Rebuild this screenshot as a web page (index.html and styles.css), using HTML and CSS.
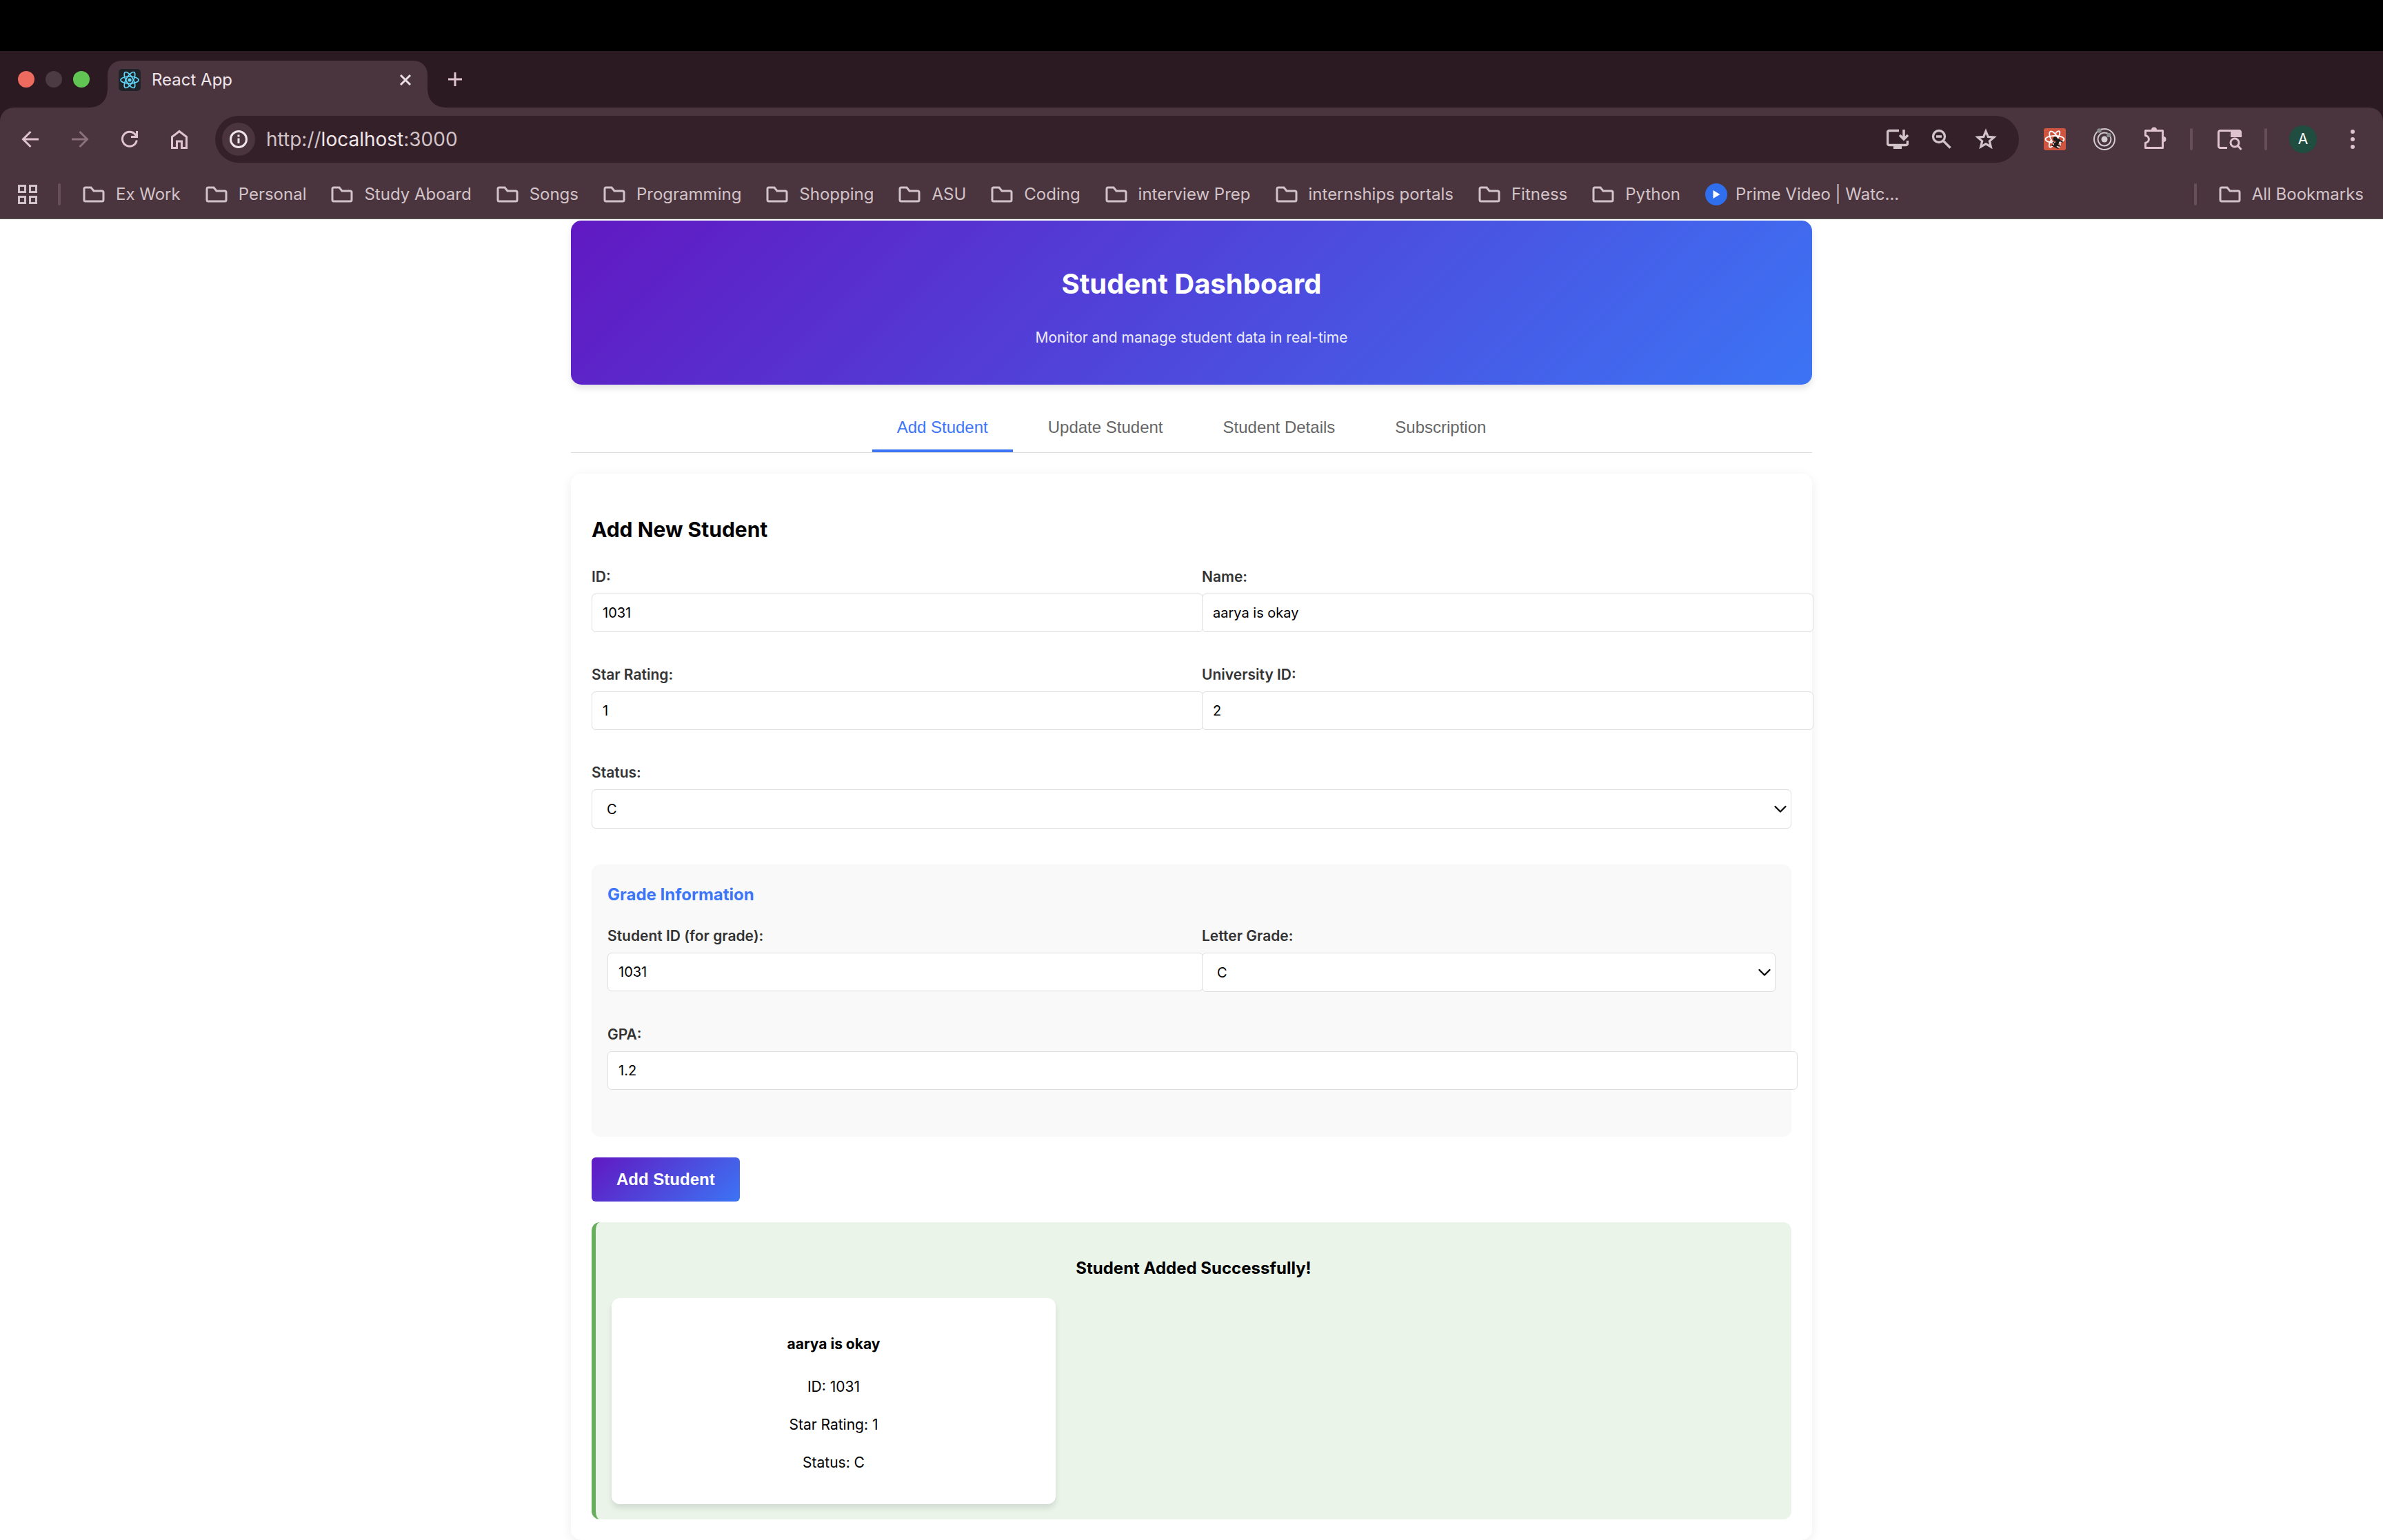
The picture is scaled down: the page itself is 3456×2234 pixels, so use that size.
FILE: index.html
```html
<!DOCTYPE html>
<html lang="en">
<head>
<meta charset="utf-8">
<meta name="viewport" content="width=device-width, initial-scale=1">
<title>React App</title>
<link rel="stylesheet" href="styles.css">
</head>
<body>
<svg class="sprite" aria-hidden="true">
  <symbol id="folder" viewBox="0 0 32 24"><path d="M4 2h8l4 5h12a2 2 0 0 1 2 2v11a2 2 0 0 1-2 2H4a2 2 0 0 1-2-2V4a2 2 0 0 1 2-2z" fill="none" stroke="currentColor" stroke-width="3"/></symbol>
  <symbol id="chevron" viewBox="0 0 18 12"><path d="M1.500 2l7.500 7.500L16.500 2" fill="none" stroke="currentColor" stroke-width="2.200" stroke-linecap="round" stroke-linejoin="round"/></symbol>
</svg>

<header class="browser">
  <div class="notch"></div>
  <div class="tabstrip">
    <div class="lights">
      <button class="light light-close" aria-label="Close window"></button>
      <button class="light light-min" aria-label="Minimize window"></button>
      <button class="light light-max" aria-label="Zoom window"></button>
    </div>
    <div class="tab">
      <svg class="icon" viewBox="0 0 32 32"><rect width="32" height="32" rx="5" fill="#20232a"/><g fill="none" stroke="#61dafb" stroke-width="1.6"><ellipse cx="16" cy="16" rx="13" ry="5"/><ellipse cx="16" cy="16" rx="13" ry="5" transform="rotate(60 16 16)"/><ellipse cx="16" cy="16" rx="13" ry="5" transform="rotate(120 16 16)"/></g><circle cx="16" cy="16" r="2.6" fill="#61dafb"/></svg>
      <span class="tab-title">React App</span>
      <button class="bare" aria-label="Close tab"><svg class="icon-sm" viewBox="0 0 20 20"><path d="M3 3l14 14M17 3L3 17" fill="none" stroke="#eadfe3" stroke-width="3"/></svg></button>
    </div>
    <button class="bare new-tab" aria-label="New tab"><svg class="icon-sm" viewBox="0 0 20 20"><path d="M10 0v20M0 10h20" fill="none" stroke="#dfc3ce" stroke-width="3"/></svg></button>
  </div>

  <div class="toolbar">
    <div class="nav-buttons">
      <button class="bare" aria-label="Back"><svg class="icon" viewBox="0 0 32 32"><path d="M28 16H6M16.500 5L5.500 16l11 11" fill="none" stroke="currentColor" stroke-width="3"/></svg></button>
      <button class="bare dim" aria-label="Forward"><svg class="icon" viewBox="0 0 32 32"><path d="M4 16h22M15.500 5l11 11-11 11" fill="none" stroke="currentColor" stroke-width="3"/></svg></button>
      <button class="bare" aria-label="Reload"><svg class="icon" viewBox="0 0 32 32"><path d="M26.300 17.500A10.500 10.500 0 1 1 24 9l2 2.500M26.500 4v8.500H18" fill="none" stroke="currentColor" stroke-width="3"/></svg></button>
      <button class="bare" aria-label="Home"><svg class="icon" viewBox="0 0 32 32"><path d="M5.500 28.500V12.500L16 4.500l10.500 8v16h-7v-9.500h-7v9.500z" fill="none" stroke="currentColor" stroke-width="3"/></svg></button>
    </div>
    <div class="address">
      <button class="info" aria-label="View site information"><svg class="icon" viewBox="0 0 32 32"><circle cx="16" cy="16" r="11.500" fill="none" stroke="currentColor" stroke-width="3"/><path d="M16 14.500v7.500M16 9.500v3" stroke="currentColor" stroke-width="3"/></svg></button>
      <div class="url" role="textbox" aria-label="Address">http://<b>localhost</b>:3000</div>
      <button class="bare" aria-label="Install app"><svg class="icon" viewBox="0 0 32 32"><path d="M18 3.500H4a2.500 2.500 0 0 0-2.500 2.500v16a2.500 2.500 0 0 0 2.500 2.500h24a2.500 2.500 0 0 0 2.500-2.500v-4" fill="none" stroke="currentColor" stroke-width="3.500"/><path d="M10 25h12v5H10z" fill="currentColor"/><path d="M25 2v13M19 10l6 6 6-6" fill="none" stroke="currentColor" stroke-width="3.500"/></svg></button>
      <button class="bare" aria-label="Zoom"><svg class="icon" viewBox="0 0 32 32"><circle cx="12" cy="12" r="8.500" fill="none" stroke="currentColor" stroke-width="3.300"/><path d="M8 12h8M18 18l10.500 10.500" fill="none" stroke="currentColor" stroke-width="3.300"/></svg></button>
      <button class="bare" aria-label="Bookmark this tab"><svg class="icon" viewBox="0 0 32 32"><path d="M16 4.500l3.300 7.900 8.500.7-6.500 5.600 2 8.300L16 22.600 8.700 27l2-8.300-6.500-5.600 8.500-.7z" fill="none" stroke="currentColor" stroke-width="3.200"/></svg></button>
    </div>
    <div class="extensions">
      <button class="bare" aria-label="React Developer Tools"><svg class="icon" viewBox="0 0 32 32"><rect width="32" height="32" rx="3" fill="#cf5540"/><g fill="none" stroke="#fff" stroke-width="1.800"><ellipse cx="16" cy="16" rx="13.500" ry="5"/><ellipse cx="16" cy="16" rx="13" ry="5" transform="rotate(60 16 16)"/><path d="M17 7.500C19.500 4 22 3.500 23 5c1 1.800 0 5-2.500 9.500M14 24.500c-2.500 3.300-5 3.800-6 2.300-1-1.800 0-5 2.500-9.300"/></g><g transform="translate(19.500 20.500) rotate(28)"><circle cx="-5" cy="-3" r="3" fill="#1b1b1b"/><rect x="-2.500" y="-6" width="5" height="13" rx="2.500" fill="#1b1b1b"/><path d="M-6 3h13M-5 7h11M-1-4h8" stroke="#1b1b1b" stroke-width="1.800"/></g></svg></button>
      <button class="bare" aria-label="Orbit extension"><svg class="icon" viewBox="0 0 32 32"><g fill="none" stroke="#d2ccd1" stroke-width="2"><circle cx="16" cy="16" r="15"/><circle cx="16" cy="16" r="9.500"/></g><circle cx="16" cy="16" r="4.500" fill="#d2ccd1"/><circle cx="8.500" cy="3.500" r="3.200" fill="#8b8a8c"/><circle cx="22.500" cy="10" r="3.200" fill="#8b8a8c"/></svg></button>
      <button class="bare" aria-label="Extensions"><svg class="icon spill" viewBox="0 0 32 32"><path d="M3.500 3.500h25v25h-25v-7.300c6.500-.700 6.500-9.700 0-10.400z" fill="none" stroke="currentColor" stroke-width="3" stroke-linejoin="round"/><path d="M12 2.500a4 4 0 0 1 8 0zM29.500 12a4 4 0 0 1 0 8z" fill="currentColor"/></svg></button>
    </div>
    <span class="divider"></span>
    <div class="window-tools">
      <button class="bare" aria-label="Search tabs"><svg class="icon-lg" viewBox="0 0 36 32"><path d="M14 28.500H4a2.500 2.500 0 0 1-2.500-2.500V6A2.500 2.500 0 0 1 4 3.500h27A2.500 2.500 0 0 1 33.500 6v7" fill="none" stroke="currentColor" stroke-width="3"/><path d="M19 3h15v10H19z" fill="currentColor"/><circle cx="25" cy="21" r="6" fill="#4a343e" stroke="currentColor" stroke-width="3"/><path d="M29 25l5.500 6" stroke="currentColor" stroke-width="3"/></svg></button>
      <span class="divider"></span>
      <button class="avatar" aria-label="Profile">A</button>
    </div>
    <button class="bare" aria-label="Browser menu"><svg class="icon" viewBox="0 0 32 32" fill="currentColor"><circle cx="16" cy="5" r="3"/><circle cx="16" cy="16" r="3"/><circle cx="16" cy="27" r="3"/></svg></button>
  </div>

  <nav class="bookmarks" aria-label="Bookmarks">
    <button class="bare" aria-label="Tab groups"><svg class="icon" viewBox="0 0 32 32"><path d="M3.500 3.500h9v9h-9zM19.500 3.500h9v9h-9zM3.500 19.500h9v9h-9zM19.500 19.500h9v9h-9z" fill="none" stroke="currentColor" stroke-width="3"/></svg></button>
    <span class="divider"></span>
    <a class="bookmark" href="#"><svg class="folder"><use href="#folder"/></svg>Ex Work</a>
    <a class="bookmark" href="#"><svg class="folder"><use href="#folder"/></svg>Personal</a>
    <a class="bookmark" href="#"><svg class="folder"><use href="#folder"/></svg>Study Aboard</a>
    <a class="bookmark" href="#"><svg class="folder"><use href="#folder"/></svg>Songs</a>
    <a class="bookmark" href="#"><svg class="folder"><use href="#folder"/></svg>Programming</a>
    <a class="bookmark" href="#"><svg class="folder"><use href="#folder"/></svg>Shopping</a>
    <a class="bookmark" href="#"><svg class="folder"><use href="#folder"/></svg>ASU</a>
    <a class="bookmark" href="#"><svg class="folder"><use href="#folder"/></svg>Coding</a>
    <a class="bookmark" href="#"><svg class="folder"><use href="#folder"/></svg>interview Prep</a>
    <a class="bookmark" href="#"><svg class="folder"><use href="#folder"/></svg>internships portals</a>
    <a class="bookmark" href="#"><svg class="folder"><use href="#folder"/></svg>Fitness</a>
    <a class="bookmark" href="#"><svg class="folder"><use href="#folder"/></svg>Python</a>
    <a class="bookmark site" href="#"><svg class="icon" viewBox="0 0 32 32"><circle cx="16" cy="16" r="16" fill="#2f6fed"/><path d="M11.500 10v12l10-6z" fill="#fff"/></svg>Prime Video | Watc...</a>
    <span class="divider last-divider"></span>
    <a class="bookmark all" href="#"><svg class="folder"><use href="#folder"/></svg>All Bookmarks</a>
  </nav>
</header>

<main class="dashboard">
  <header class="hero">
    <h1>Student Dashboard</h1>
    <p>Monitor and manage student data in real-time</p>
  </header>

  <nav class="tabs">
    <button class="tab-button active">Add Student</button>
    <button class="tab-button">Update Student</button>
    <button class="tab-button">Student Details</button>
    <button class="tab-button">Subscription</button>
  </nav>

  <section class="panel">
    <h2>Add New Student</h2>
    <form>
      <div class="form-grid">
        <div class="field"><label for="id">ID:</label><input id="id" type="text" value="1031"></div>
        <div class="field"><label for="name">Name:</label><input id="name" type="text" value="aarya is okay"></div>
        <div class="field"><label for="rating">Star Rating:</label><input id="rating" type="text" value="1"></div>
        <div class="field"><label for="university">University ID:</label><input id="university" type="text" value="2"></div>
        <div class="field wide"><label for="status">Status:</label>
          <div class="select"><select id="status"><option>C</option></select><svg class="chevron"><use href="#chevron"/></svg></div>
        </div>
      </div>

      <div class="grade">
        <h4>Grade Information</h4>
        <div class="form-grid">
          <div class="field"><label for="grade-id">Student ID (for grade):</label><input id="grade-id" type="text" value="1031"></div>
          <div class="field"><label for="letter">Letter Grade:</label>
            <div class="select"><select id="letter"><option>C</option></select><svg class="chevron"><use href="#chevron"/></svg></div>
          </div>
          <div class="field wide"><label for="gpa">GPA:</label><input id="gpa" type="text" value="1.2"></div>
        </div>
      </div>

      <button class="submit" type="button">Add Student</button>
    </form>

    <div class="success">
      <h3>Student Added Successfully!</h3>
      <article class="student">
        <h4>aarya is okay</h4>
        <p>ID: 1031</p>
        <p>Star Rating: 1</p>
        <p>Status: C</p>
      </article>
    </div>
  </section>
</main>
</body>
</html>
```
FILE: styles.css
```css
body {
  margin: 0;
  background: #fff;
  color: #000;
  font-family: Inter, "Liberation Sans", sans-serif;
}

h1, h2, h3, h4, p { margin: 0; }
button { font: inherit; cursor: pointer; }
svg { display: block; flex: none; }

.sprite { position: absolute; width: 0; height: 0; }
.icon { width: 32px; height: 32px; }
.icon-lg { width: 36px; height: 32px; }
.icon-sm { width: 20px; height: 20px; }
.folder { width: 32px; height: 24px; }
.spill { overflow: visible; }

.bare {
  flex: none;
  padding: 0;
  border: 0;
  background: none;
  color: inherit;
}

/* Browser window */
.browser {
  background: #2c1a22;
  border-bottom: 2px solid #4f4647;
  font-size: 24px;
  line-height: 32px;
}
.notch { height: 74px; background: #000; }

.tabstrip {
  display: flex;
  align-items: center;
  height: 82px;
  padding-left: 26px;
}
.lights { display: flex; gap: 16px; }
.light {
  width: 24px;
  height: 24px;
  padding: 0;
  border: 0;
  border-radius: 50%;
}
.light-close { background: #ed6a5e; }
.light-min { background: #4c3b43; }
.light-max { background: #61c554; }

.tab {
  position: relative;
  display: flex;
  align-items: center;
  align-self: flex-end;
  gap: 16px;
  box-sizing: border-box;
  width: 464px;
  height: 68px;
  margin-left: 26px;
  padding: 0 22px 12px 16px;
  border-radius: 20px 20px 0 0;
  background: #4a343e;
  color: #f0e6ea;
}
.tab::before, .tab::after {
  content: "";
  position: absolute;
  bottom: 0;
  width: 24px;
  height: 24px;
}
.tab::before { right: 100%; background: radial-gradient(circle at 0 0, transparent 23px, #4a343e 24px); }
.tab::after { left: 100%; background: radial-gradient(circle at 100% 0, transparent 23px, #4a343e 24px); }
.tab-title { flex: 1; }
.new-tab { margin-left: 30px; }

.toolbar {
  display: flex;
  align-items: center;
  gap: 36px;
  height: 92px;
  padding: 0 28px;
  border-radius: 20px 20px 0 0;
  background: #4a343e;
  color: #dfc3ce;
}
.nav-buttons, .extensions { display: flex; gap: 40px; }
.window-tools { display: flex; align-items: center; gap: 32px; }
.dim { color: #8b717c; }

.address {
  flex: 1;
  display: flex;
  align-items: center;
  gap: 32px;
  height: 68px;
  padding: 0 32px 0 10px;
  box-sizing: border-box;
  border-radius: 34px;
  background: #342029;
  color: #d2c3c8;
}
.info {
  display: grid;
  place-items: center;
  width: 48px;
  height: 48px;
  margin-right: -16px;
  padding: 0;
  border: 0;
  border-radius: 50%;
  background: #4a343e;
  color: #f0e6ea;
}
.url { flex: 1; font-size: 28px; }
.url b { font-weight: 400; color: #f0e6ea; }

.divider {
  flex: none;
  width: 4px;
  height: 32px;
  border-radius: 2px;
  background: #664f59;
}
.avatar {
  width: 40px;
  height: 40px;
  padding: 0;
  border: 0;
  border-radius: 50%;
  background: #1f4d40;
  color: #fff;
  font-size: 21px;
}

.bookmarks {
  display: flex;
  align-items: center;
  gap: 36px;
  height: 68px;
  padding: 0 28px 0 24px;
  background: #4a343e;
  color: #d2c3c8;
  white-space: nowrap;
}
.bookmarks .divider { margin: 0 -4px 0 -8px; }
.bookmark {
  display: flex;
  align-items: center;
  gap: 16px;
  color: inherit;
  text-decoration: none;
}
.bookmark.site { gap: 12px; }
.bookmarks .last-divider { margin: 0 -4px 0 auto; }

/* Dashboard */
.dashboard {
  max-width: 1800px;
  margin: 0 auto;
  padding-top: 2px;
}
.hero {
  padding: 68px 30px 56px;
  border-radius: 15px;
  background: linear-gradient(135deg, #6119c2, #3c74f4);
  box-shadow: 0 6px 9px rgba(0, 0, 0, 0.1);
  color: #fff;
  text-align: center;
}
.hero h1 { font-size: 40px; line-height: 48px; }
.hero p { margin-top: 42px; font-size: 21px; line-height: 24px; opacity: 0.9; }

.tabs {
  display: flex;
  justify-content: center;
  gap: 15px;
  margin: 30px 0;
  border-bottom: 1px solid #ddd;
}
.tab-button {
  padding: 18px 36px;
  border: 0;
  border-bottom: 4px solid transparent;
  background: none;
  color: #666;
  font-family: "Liberation Sans", Arial, sans-serif;
  font-size: 24px;
  line-height: 28px;
}
.tab-button.active { border-color: #3c76f6; color: #3c76f6; }

.panel {
  padding: 63px 30px 30px;
  border-radius: 15px;
  box-shadow: 0 3px 15px rgba(0, 0, 0, 0.08);
}
.panel h2 { font-size: 30px; line-height: 36px; }

.form-grid {
  display: grid;
  grid-template-columns: 1fr 1fr;
  gap: 50px 30px;
}
.panel h2 + form { margin-top: 39px; }
.wide { grid-column: 1 / -1; }
.field label {
  display: block;
  margin-bottom: 12px;
  color: #333;
  font-size: 21px;
  font-weight: 600;
  line-height: 24px;
}
.field input, .field select {
  border: 1px solid #ddd;
  border-radius: 6px;
  background: #fff;
  color: #000;
  font-family: inherit;
  font-size: 20px;
  line-height: 24px;
}
/* Inputs keep the content-box model, so they run past their column */
.field input {
  display: block;
  box-sizing: content-box;
  width: 100%;
  height: 24px;
  padding: 15px;
}
.select { display: grid; align-items: center; }
.select > * { grid-area: 1 / 1; }
.select select {
  width: 100%;
  height: 57px;
  padding: 15px 21px;
  appearance: none;
}
.chevron {
  width: 18px;
  height: 12px;
  margin-right: 7px;
  justify-self: end;
  pointer-events: none;
}

.grade {
  margin: 52px 0 30px;
  padding: 29px 23px 68px;
  border-radius: 12px;
  background: #f9f9f9;
}
.grade h4 {
  margin-bottom: 33px;
  color: #3c76f6;
  font-size: 24px;
  line-height: 30px;
}

.submit {
  display: block;
  padding: 18px 36px;
  border: 0;
  border-radius: 6px;
  background: linear-gradient(135deg, #6119c2, #3c74f4);
  color: #fff;
  font-family: "Liberation Sans", Arial, sans-serif;
  font-size: 24px;
  font-weight: 700;
  line-height: 28px;
}

.success {
  margin-top: 30px;
  padding: 51px 23px 22px;
  border-left: 6px solid #67ae5c;
  border-radius: 12px;
  background: #eaf4e9;
  text-align: center;
}
.success h3 { margin-bottom: 27px; font-size: 24px; line-height: 32px; }
.student {
  max-width: 600px;
  padding: 55px 22px 48px;
  border-radius: 12px;
  background: #fff;
  box-shadow: 0 6px 9px rgba(0, 0, 0, 0.1);
  font-size: 21px;
  line-height: 24px;
}
.student h4 { margin-bottom: 38px; }
.student p + p { margin-top: 31px; }
```
